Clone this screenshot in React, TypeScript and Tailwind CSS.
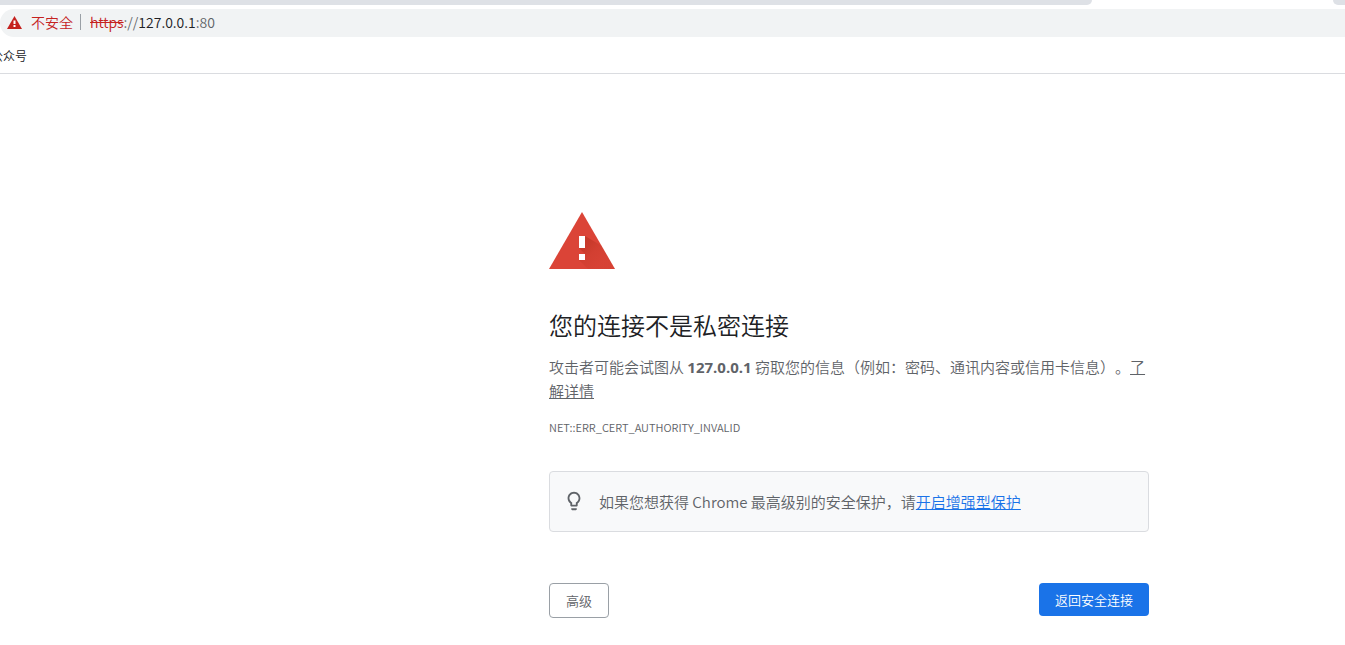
import React from "react";

function WarningBadge() {
  return (
    <svg viewBox="0 0 15 13" className="h-[13px] w-[15px]" aria-hidden="true">
      <path d="M7.5 0 15 13H0z" fill="#c5221f" />
      <path d="M6.5 4.5h2V8h-2zM6.5 9h2v2h-2z" fill="#fff" />
    </svg>
  );
}

function WarningTriangle() {
  return (
    <svg viewBox="0 0 66 57" className="h-[57px] w-[66px]" aria-hidden="true">
      <defs>
        <linearGradient id="shade" gradientUnits="userSpaceOnUse" x1="32" y1="34" x2="50" y2="52">
          <stop offset="0" stopColor="#a52714" stopOpacity="0.4" />
          <stop offset="0.5" stopColor="#a52714" stopOpacity="0.16" />
          <stop offset="1" stopColor="#a52714" stopOpacity="0.08" />
        </linearGradient>
      </defs>
      <path d="M33 0 66 57H0z" fill="#db4437" />
      <path d="M36 24 52.5 33.7 66 57H39L30 48l6-6-6-6z" fill="url(#shade)" />
      <path d="M30 24h6v12h-6zM30 42h6v6h-6z" fill="#fff" />
    </svg>
  );
}

function Lightbulb() {
  return (
    <svg viewBox="0 0 24 24" className="size-[22px] shrink-0" fill="#5f6368" aria-hidden="true">
      <path d="M9 21c0 .55.45 1 1 1h4c.55 0 1-.45 1-1v-1H9v1zm3-19C8.14 2 5 5.14 5 9c0 2.38 1.19 4.47 3 5.74V17c0 .55.45 1 1 1h6c.55 0 1-.45 1-1v-2.26c1.81-1.27 3-3.36 3-5.74 0-3.86-3.14-7-7-7zm2.85 11.1-.85.6V16h-4v-2.3l-.85-.6A4.997 4.997 0 0 1 7 9c0-2.76 2.24-5 5-5s5 2.24 5 5c0 1.63-.8 3.16-2.15 4.1z" />
    </svg>
  );
}

function BrowserBar() {
  return (
    <header className="overflow-hidden border-b border-[#dadce0] bg-white">
      <div className="flex h-[5px]">
        <div className="flex-1 rounded-br-[5px] bg-[#dee1e6]" />
        <div className="w-[241px]" />
        <div className="w-3 rounded-bl-[5px] bg-[#dee1e6]" />
      </div>
      <div className="mt-1 flex h-7 items-center rounded-l-full bg-[#f1f3f4] pb-0.5 pl-[7px] text-sm">
        <WarningBadge />
        <span className="ml-[9px] text-[#c5221f]">不安全</span>
        <span className="mr-[9px] ml-[7px] h-4 w-px bg-[#9aa0a6]" />
        <span className="text-[#5f6368]">
          <span className="text-[#c5221f] line-through">https</span>://
          <span className="text-[#202124]">127.0.0.1</span>:80
        </span>
      </div>
      <div className="flex h-9 items-center pt-0.5 text-xs text-[#202124]">
        <span className="-ml-[9px]">公众号</span>
      </div>
    </header>
  );
}

export default function App() {
  return (
    <div className="min-h-screen bg-white font-['Noto_Sans_CJK_SC',sans-serif] font-[350] [text-spacing-trim:space-all]">
      <BrowserBar />
      <main className="pt-[138px] pl-[353px]">
        <div className="mx-auto max-w-[600px] text-[15px] leading-6 text-[#5f6368]">
          <WarningTriangle />
          <h1 className="mt-10 text-2xl leading-8 font-[350] text-[#202124]">您的连接不是私密连接</h1>
          <p className="mt-3.5">
            攻击者可能会试图从 <strong className="font-['Open_Sans',sans-serif] font-bold">127.0.0.1</strong>{" "}
            窃取您的信息（例如：密码、通讯内容或信用卡信息）。
            <a href="#" className="underline">了解详情</a>
          </p>
          <div className="mt-3 text-[11px] leading-6">NET::ERR_CERT_AUTHORITY_INVALID</div>
          <div className="mt-8 flex items-start gap-3.5 rounded border border-[#dadce0] bg-[#f8f9fa] px-[13px] pt-[18px] pb-[17px]">
            <Lightbulb />
            <p>
              如果您想获得 Chrome 最高级别的安全保护，请
              <a href="#" className="text-[#1a73e8] underline">开启增强型保护</a>
            </p>
          </div>
          <div className="mt-[51px] flex items-start justify-between text-[13px]">
            <button className="rounded border border-[#9aa0a6] px-4 py-[3px] leading-[27px]">高级</button>
            <button className="rounded bg-[#1a73e8] px-4 py-[3px] leading-[27px] text-white">返回安全连接</button>
          </div>
        </div>
      </main>
    </div>
  );
}
